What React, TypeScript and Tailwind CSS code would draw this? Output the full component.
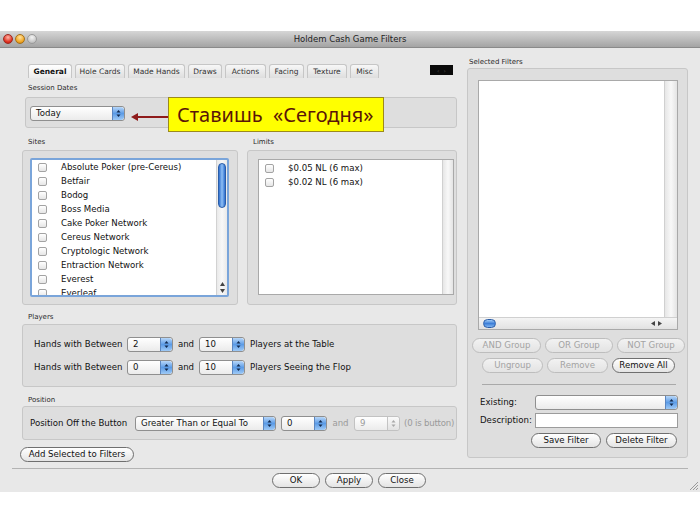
import React from 'react';

const SITES = [
  'Absolute Poker (pre-Cereus)',
  'Betfair',
  'Bodog',
  'Boss Media',
  'Cake Poker Network',
  'Cereus Network',
  'Cryptologic Network',
  'Entraction Network',
  'Everest',
  'Everleaf',
];

const LIMITS = ['$0.05 NL (6 max)', '$0.02 NL (6 max)'];

const TABS: [string, string][] = [
  ['General', 'w-[44px]'],
  ['Hole Cards', 'w-[50px]'],
  ['Made Hands', 'w-[57px]'],
  ['Draws', 'w-[34px]'],
  ['Actions', 'w-[41px]'],
  ['Facing', 'w-[35px]'],
  ['Texture', 'w-[40px]'],
  ['Misc', 'w-[29px]'],
];

function Stepper({ disabled }: { disabled?: boolean }) {
  const fill = disabled ? '#a8a8a8' : '#10284d';
  return (
    <div
      className={`w-[12px] h-full flex items-center justify-center rounded-r-[3px] border-l ${
        disabled
          ? 'border-[#c4c4c4] bg-gradient-to-b from-[#fafafa] to-[#e2e2e2]'
          : 'border-[#5b86c0] bg-gradient-to-b from-[#b8d7f8] via-[#5b9be6] to-[#9fcaf6]'
      }`}
    >
      <svg width="5" height="9" viewBox="0 0 5 9">
        <path d="M0.5 3.6 L2.5 1 L4.5 3.6 Z" fill={fill} />
        <path d="M0.5 5.4 L2.5 8 L4.5 5.4 Z" fill={fill} />
      </svg>
    </div>
  );
}

function PopUp({ value, className, disabled }: { value: string; className: string; disabled?: boolean }) {
  return (
    <div
      className={`flex h-[15px] rounded-[3px] border overflow-hidden ${
        disabled ? 'border-[#c2c2c2] text-[#9a9a9a]' : 'border-[#8f8f8f] text-[#111]'
      } bg-gradient-to-b from-white to-[#ebebeb] ${className}`}
    >
      <div className="flex-1 flex items-center pl-[5px] whitespace-nowrap overflow-hidden">{value}</div>
      <Stepper disabled={disabled} />
    </div>
  );
}

function Pill({
  children,
  className,
  disabled,
}: {
  children: React.ReactNode;
  className: string;
  disabled?: boolean;
}) {
  return (
    <div
      className={`h-[15px] flex items-center justify-center rounded-full border whitespace-nowrap ${
        disabled
          ? 'border-[#bdbdbd] text-[#a3a3a3] bg-gradient-to-b from-[#f2f2f2] to-[#e3e3e3]'
          : 'border-[#6f6f6f] text-[#111] bg-gradient-to-b from-white to-[#e4e4e4]'
      } ${className}`}
    >
      {children}
    </div>
  );
}

function Check() {
  return <div className="w-[9px] h-[9px] shrink-0 rounded-[2px] border border-[#a3a3a3] bg-gradient-to-b from-white to-[#e6e6e6]" />;
}

function Label({ children, className = '' }: { children: React.ReactNode; className?: string }) {
  return <div className={`h-[9px] leading-[9px] text-[7px] text-[#2a2a2a] pl-[6px] ${className}`}>{children}</div>;
}

export default function App() {
  return (
    <div className="w-[700px] h-[525px] bg-white overflow-hidden relative font-['Lucida_Grande','DejaVu_Sans',sans-serif] text-[8.6px] text-[#111]">
      <div className="h-[31px]" />
      <div className="h-[461px] bg-[#e8e8e8] flex flex-col relative">
        {/* Title bar */}
        <div className="h-[17px] shrink-0 flex items-center justify-center relative bg-gradient-to-b from-[#d6d6d6] to-[#a4a4a4] border-b border-[#8a8a8a]">
          <div className="absolute left-[3px] top-[3px] flex gap-[2px]">
            <div className="w-[10px] h-[10px] rounded-full border border-[#9b2a22] bg-[radial-gradient(circle_at_50%_30%,#ffb4a8,#e0301f_65%,#b4180d)]" />
            <div className="w-[10px] h-[10px] rounded-full border border-[#a5701a] bg-[radial-gradient(circle_at_50%_30%,#ffe2a0,#f0a623_65%,#c7780a)]" />
            <div className="w-[10px] h-[10px] rounded-full border border-[#9a9a9a] bg-[radial-gradient(circle_at_50%_30%,#f4f4f4,#c8c8c8_65%,#a9a9a9)]" />
          </div>
          <span className="text-[8.5px] text-[#222]">Holdem Cash Game Filters</span>
        </div>

        {/* Main area */}
        <div className="h-[420px] shrink-0 flex">
          {/* Left column */}
          <div className="w-[462px] pl-[22px] flex flex-col relative">
            {/* Tabs */}
            <div className="mt-[16px] h-[14px] flex items-end pl-[6px] pr-[9px]">
              <div className="flex gap-[3px] h-full">
                {TABS.map(([t, w], i) => (
                  <div
                    key={t}
                    className={`${w} h-full flex items-center justify-center rounded-t-[3px] border border-b-0 border-[#c6c6c6] text-[7.5px] ${
                      i === 0
                        ? 'bg-gradient-to-b from-white to-[#ececec] font-bold text-[#111]'
                        : 'bg-gradient-to-b from-[#f7f7f7] to-[#dedede] text-[#333]'
                    }`}
                  >
                    {t}
                  </div>
                ))}
              </div>
              <div className="ml-auto mb-[3px] w-[23px] h-[10px] bg-[#0a0a0a] flex items-center justify-center gap-[4px] text-[6px] text-[#555]">
                <span>‹</span>
                <span>›</span>
              </div>
            </div>

            {/* Session Dates */}
            <Label className="mt-[6px]">Session Dates</Label>
            <div className="mt-[4px] ml-[3px] w-[432px] h-[31px] rounded-[3px] border border-[#c7c7c7] bg-[#dedede] pl-[4px] pt-[8px]">
              <PopUp value="Today" className="w-[95px]" />
            </div>

            {/* Sites / Limits */}
            <div className="mt-[10px] flex gap-[9px]">
              <div className="w-[216px]">
                <Label>Sites</Label>
              </div>
              <div className="w-[210px]">
                <Label>Limits</Label>
              </div>
            </div>
            <div className="mt-[3px] flex gap-[9px]">
              <div className="w-[216px] h-[155px] rounded-[3px] border border-[#c7c7c7] bg-[#dedede] pl-[7px] pt-[7px]">
                <div className="w-[199px] h-[139px] bg-white border-2 border-[#7aa5da] rounded-[2px] flex overflow-hidden">
                  <div className="flex-1 flex flex-col">
                    {SITES.map((s) => (
                      <div key={s} className="h-[14px] shrink-0 flex items-center pl-[6px] gap-[14px] whitespace-nowrap">
                        <Check />
                        <span>{s}</span>
                      </div>
                    ))}
                  </div>
                  <div className="w-[11px] h-full flex flex-col bg-gradient-to-r from-[#e9e9e9] via-[#f8f8f8] to-[#e9e9e9] border-l border-[#d2d2d2]">
                    <div className="mt-[3px] mx-auto w-[8px] h-[45px] rounded-full bg-gradient-to-r from-[#2f6fce] via-[#8fc0f5] to-[#2f6fce] border border-[#2a5da8]" />
                    <div className="mt-auto flex flex-col items-center pb-[2px] gap-[3px]">
                      <svg width="5" height="4" viewBox="0 0 5 4">
                        <path d="M0 4 L2.5 0 L5 4 Z" fill="#444" />
                      </svg>
                      <svg width="5" height="4" viewBox="0 0 5 4">
                        <path d="M0 0 L2.5 4 L5 0 Z" fill="#444" />
                      </svg>
                    </div>
                  </div>
                </div>
              </div>
              <div className="w-[210px] h-[155px] rounded-[3px] border border-[#c7c7c7] bg-[#dedede] pl-[10px] pt-[8px]">
                <div className="w-[196px] h-[136px] bg-white border border-[#a9a9a9] flex">
                  <div className="flex-1 flex flex-col pt-[1px]">
                    {LIMITS.map((l) => (
                      <div key={l} className="h-[14px] flex items-center pl-[6px] gap-[14px] whitespace-nowrap">
                        <Check />
                        <span>{l}</span>
                      </div>
                    ))}
                  </div>
                  <div className="w-[11px] h-full bg-gradient-to-r from-[#e6e6e6] via-[#f8f8f8] to-[#e4e4e4] border-l border-[#d0d0d0]" />
                </div>
              </div>
            </div>

            {/* Players */}
            <Label className="mt-[8px]">Players</Label>
            <div className="mt-[2px] w-[435px] h-[63px] rounded-[3px] border border-[#c7c7c7] bg-[#dedede] pl-[11px] pt-[12px] flex flex-col gap-[8px]">
              <div className="flex items-center h-[15px]">
                <span className="w-[93px]">Hands with Between</span>
                <PopUp value="2" className="w-[46px]" />
                <span className="w-[26px] text-center">and</span>
                <PopUp value="10" className="w-[46px]" />
                <span className="ml-[5px]">Players at the Table</span>
              </div>
              <div className="flex items-center h-[15px]">
                <span className="w-[93px]">Hands with Between</span>
                <PopUp value="0" className="w-[46px]" />
                <span className="w-[26px] text-center">and</span>
                <PopUp value="10" className="w-[46px]" />
                <span className="ml-[5px]">Players Seeing the Flop</span>
              </div>
            </div>

            {/* Position */}
            <Label className="mt-[9px]">Position</Label>
            <div className="mt-[1px] w-[435px] h-[34px] rounded-[3px] border border-[#c7c7c7] bg-[#dedede] pl-[7px] pt-[9px]">
              <div className="flex items-center h-[15px]">
                <span className="w-[105px] whitespace-nowrap">Position Off the Button</span>
                <PopUp value="Greater Than or Equal To" className="w-[141px]" />
                <PopUp value="0" className="w-[46px] ml-[5px]" />
                <span className="w-[27px] text-center text-[#9a9a9a]">and</span>
                <PopUp value="9" className="w-[46px]" disabled />
                <span className="ml-[4px] text-[#9a9a9a] whitespace-nowrap tracking-[-0.2px]">(0 is button)</span>
              </div>
            </div>

            <Pill className="mt-[7px] -ml-[2px] w-[114px]">Add Selected to Filters</Pill>

            {/* Annotation callout */}
            <svg className="absolute left-[131px] top-[64px]" width="38" height="10" viewBox="0 0 38 10">
              <path d="M37 5 L5 5" stroke="#8e1b1b" strokeWidth="2" />
              <path d="M0 5 L7 1 L7 9 Z" fill="#8e1b1b" />
            </svg>
            <div className="absolute left-[168px] top-[49px] w-[216px] h-[35px] bg-[#ffff00] border border-[#9c8a1c] flex items-center pl-[8px] font-['Noto_Sans','Open_Sans',sans-serif] text-[20px] text-[#5a1608] whitespace-pre">
              Ставишь  «Сегодня»
            </div>
          </div>

          {/* Right column */}
          <div className="pl-[5px] flex flex-col">
            <Label className="mt-[10px] !pl-[2px]">Selected Filters</Label>
            <div className="mt-[1px] w-[221px] h-[390px] rounded-[3px] border border-[#c7c7c7] bg-[#dedede] flex flex-col">
              <div className="mt-[11px] ml-[10px] w-[200px] h-[250px] bg-white border border-[#a9a9a9] flex flex-col">
                <div className="flex-1 flex">
                  <div className="flex-1" />
                  <div className="w-[13px] h-full bg-gradient-to-r from-[#e6e6e6] via-[#f8f8f8] to-[#e4e4e4] border-l border-[#d0d0d0]" />
                </div>
                <div className="h-[12px] flex items-center border-t border-[#d0d0d0] bg-gradient-to-b from-[#f4f4f4] to-[#e2e2e2]">
                  <div className="ml-[4px] w-[13px] h-[9px] rounded-full bg-gradient-to-b from-[#9fcaf6] via-[#3d7fd8] to-[#7fb3ef] border border-[#2a5da8]" />
                  <div className="ml-auto mr-[15px] flex gap-[3px] items-center">
                    <svg width="4" height="5" viewBox="0 0 4 5">
                      <path d="M4 0 L0 2.5 L4 5 Z" fill="#444" />
                    </svg>
                    <svg width="4" height="5" viewBox="0 0 4 5">
                      <path d="M0 0 L4 2.5 L0 5 Z" fill="#444" />
                    </svg>
                  </div>
                </div>
              </div>

              <div className="mt-[8px] ml-[4px] flex gap-[4px]">
                <Pill className="w-[69px]" disabled>AND Group</Pill>
                <Pill className="w-[68px]" disabled>OR Group</Pill>
                <Pill className="w-[68px]" disabled>NOT Group</Pill>
              </div>
              <div className="mt-[5px] ml-[14px] flex gap-[4px]">
                <Pill className="w-[61px]" disabled>Ungroup</Pill>
                <Pill className="w-[61px]" disabled>Remove</Pill>
                <Pill className="w-[63px]">Remove All</Pill>
              </div>

              <div className="mt-[11px] ml-[14px] w-[194px] h-px bg-[#a9a9a9]" />

              <div className="mt-[10px] ml-[12px] flex items-center h-[15px]">
                <span className="w-[55px]">Existing:</span>
                <PopUp value="" className="w-[143px]" />
              </div>
              <div className="mt-[3px] ml-[12px] flex items-center h-[15px]">
                <span className="w-[55px]">Description:</span>
                <div className="w-[143px] h-[15px] bg-white border border-[#9c9c9c]" />
              </div>
              <div className="mt-[5px] flex justify-end gap-[5px] pr-[10px]">
                <Pill className="w-[70px]">Save Filter</Pill>
                <Pill className="w-[71px]">Delete Filter</Pill>
              </div>
            </div>
          </div>
        </div>

        {/* Separator and dialog buttons */}
        <div className="mx-[12px] h-px bg-[#b3b3b3]" />
        <div className="flex-1 flex items-center justify-center gap-[5px] pr-[2px]">
          <Pill className="w-[48px]">OK</Pill>
          <Pill className="w-[48px]">Apply</Pill>
          <Pill className="w-[48px]">Close</Pill>
        </div>

        {/* Resize grip */}
        <svg className="absolute right-[2px] bottom-[2px]" width="9" height="9" viewBox="0 0 9 9">
          <path d="M9 1 L1 9 M9 4 L4 9 M9 7 L7 9" stroke="#9a9a9a" strokeWidth="1" />
        </svg>
      </div>
    </div>
  );
}
